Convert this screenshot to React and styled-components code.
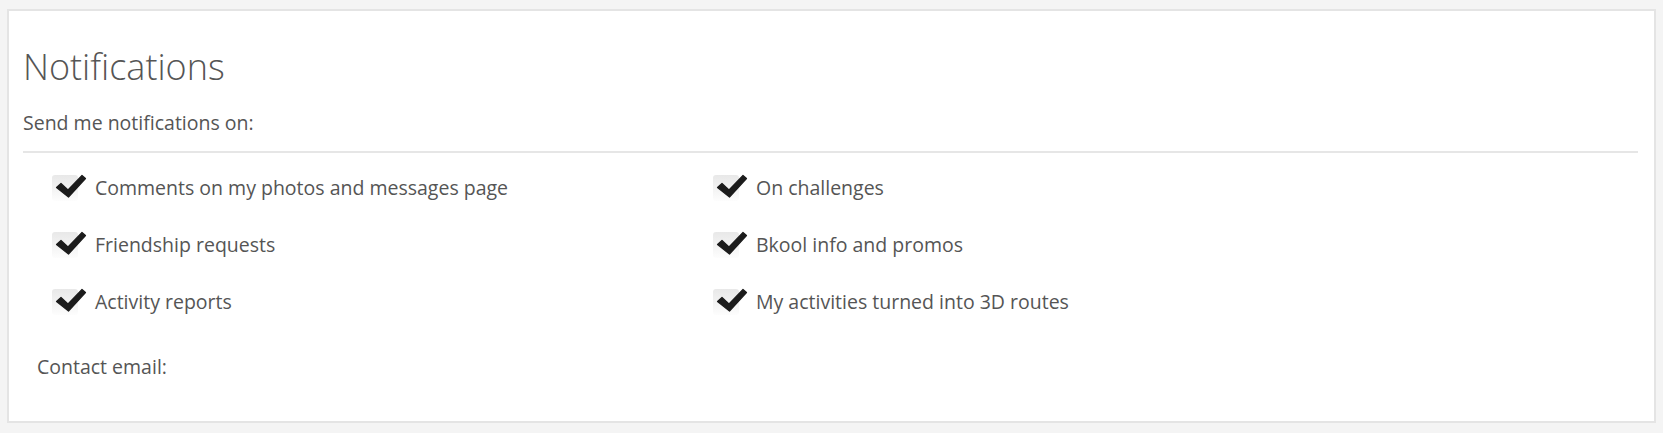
import React from "react";
import styled, { createGlobalStyle } from "styled-components";

const GlobalStyle = createGlobalStyle`
  html, body {
    margin: 0;
    padding: 0;
    background: #f4f4f4;
  }
  body {
    font-family: "Open Sans", "Liberation Sans", sans-serif;
    color: #555;
  }
`;

const leftItems = [
  "Comments on my photos and messages page",
  "Friendship requests",
  "Activity reports",
];

const rightItems = [
  "On challenges",
  "Bkool info and promos",
  "My activities turned into 3D routes",
];

export default function App() {
  return (
    <>
      <GlobalStyle />
      <StyledPage>
        <StyledPanel>
          <StyledTitle>Notifications</StyledTitle>
          <StyledSubtitle>Send me notifications on:</StyledSubtitle>
          <StyledDivider />
          <StyledGrid>
            <StyledColumn>
              {leftItems.map((label) => (
                <CheckRow key={label} label={label} />
              ))}
            </StyledColumn>
            <StyledColumn>
              {rightItems.map((label) => (
                <CheckRow key={label} label={label} />
              ))}
            </StyledColumn>
          </StyledGrid>
          <StyledContact>Contact email:</StyledContact>
        </StyledPanel>
      </StyledPage>
    </>
  );
}

function CheckRow({ label }) {
  return (
    <StyledRow>
      <StyledBox>
        <StyledTick viewBox="0 0 34 26" width="34" height="26">
          <path
            d="M3.5 13.5 L8 9.5 L15 16 L29 1.5 L32.5 4.5 L15.5 23 Z"
            fill="#1c1c1c"
            stroke="#1c1c1c"
            strokeWidth="1.2"
            strokeLinejoin="round"
          />
        </StyledTick>
      </StyledBox>
      <StyledLabel>{label}</StyledLabel>
    </StyledRow>
  );
}

const StyledPage = styled.div`
  padding: 9px 7px 10px 7px;
`;

const StyledPanel = styled.div`
  background: #fff;
  border: 2px solid #e4e4e4;
  height: 414px;
  box-sizing: border-box;
  padding: 32px 16px 0 14px;
`;

const StyledTitle = styled.h2`
  margin: 0;
  font-size: 36px;
  font-weight: 300;
  line-height: 48px;
  color: #555;
`;

const StyledSubtitle = styled.div`
  margin-top: 19px;
  font-size: 19.5px;
  line-height: 26px;
`;

const StyledDivider = styled.div`
  height: 2px;
  background: #e6e6e6;
  margin-top: 15px;
`;

const StyledGrid = styled.div`
  display: grid;
  grid-template-columns: 661px 1fr;
  padding-left: 29px;
  margin-top: 22px;
`;

const StyledColumn = styled.div`
  display: flex;
  flex-direction: column;
  gap: 31px;
`;

const StyledRow = styled.div`
  display: flex;
  align-items: center;
  height: 26px;
`;

const StyledBox = styled.span`
  position: relative;
  width: 26px;
  height: 26px;
  border-radius: 3px;
  background: linear-gradient(#e8e8e8, #fdfdfd);
  flex: none;
`;

const StyledTick = styled.svg`
  position: absolute;
  left: 1px;
  top: -1px;
  overflow: visible;
`;

const StyledLabel = styled.span`
  margin-left: 17px;
  font-size: 19.5px;
  line-height: 26px;
`;

const StyledContact = styled.div`
  margin-top: 39px;
  padding-left: 14px;
  font-size: 19.5px;
  line-height: 26px;
`;
